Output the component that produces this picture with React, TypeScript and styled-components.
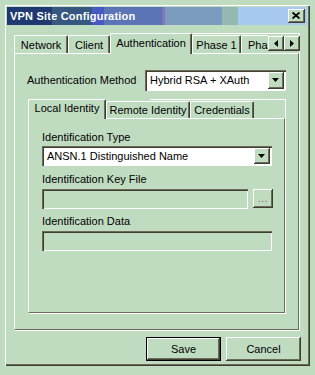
import React from "react";
import styled, { createGlobalStyle, css } from "styled-components";

const C = {
  face: "#c0dcc0",
  hi: "#ffffff",
  sh: "#6b6b58",
  dk: "#3e3e33",
};

const GlobalStyle = createGlobalStyle`
  *, *::before, *::after { box-sizing: border-box; }
  html, body { margin: 0; padding: 0; background: ${C.face}; }
  body {
    font-family: "Liberation Sans", Arial, sans-serif;
    font-size: 11px;
    color: #000;
  }
`;

const raised = css`
  background: ${C.face};
  box-shadow: inset -1px -1px 0 ${C.dk}, inset 1px 1px 0 ${C.hi},
    inset -2px -2px 0 ${C.sh};
`;

const sunken = css`
  box-shadow: inset 1px 1px 0 ${C.sh}, inset 2px 2px 0 ${C.dk},
    inset -1px -1px 0 ${C.hi};
`;

const Screen = styled.div`
  padding: 4px 0 0 4px;
`;

const Window = styled.div`
  width: 306px;
  height: 362px;
  padding: 3px;
  display: flex;
  flex-direction: column;
  background: ${C.face};
  box-shadow: inset 1px 1px 0 ${C.face}, inset 2px 2px 0 ${C.hi},
    inset -1px -1px 0 ${C.dk}, inset -2px -2px 0 ${C.sh};
`;

const TitleBar = styled.div`
  height: 18px;
  flex: 0 0 18px;
  display: flex;
  align-items: center;
  justify-content: space-between;
  padding: 0 2px 0 3px;
  background: linear-gradient(
    to right,
    #1e3a70 0 45px,
    #36577f 45px 85px,
    #4858c4 85px 97px,
    #5a74b6 97px 155px,
    #8474c0 155px 158px,
    #7b9cbe 158px 215px,
    #95b9b2 215px 231px,
    #a8caf0 231px
  );
`;

const Title = styled.span`
  color: #fff;
  font-weight: bold;
  font-size: 11px;
  letter-spacing: 0.2px;
  line-height: 13px;
`;

const CloseButton = styled.div`
  width: 17px;
  height: 14px;
  display: flex;
  align-items: center;
  justify-content: center;
  padding: 0 1px 1px 0;
  ${raised};
`;

const Body = styled.div`
  flex: 1;
  display: flex;
  flex-direction: column;
  padding: 8px 6px 0 7px;
`;

const TabControl = styled.div<{ $w: number; $h: number; $lineFrom: number }>`
  position: relative;
  width: ${(p) => p.$w}px;
  height: ${(p) => p.$h}px;
  flex: 0 0 auto;
  display: flex;
  flex-direction: column;
  &::before {
    content: "";
    position: absolute;
    top: 0;
    left: ${(p) => p.$lineFrom}px;
    right: 0;
    height: 1px;
    background: ${C.hi};
  }
  &::after {
    content: "";
    position: absolute;
    top: 0;
    right: 0;
    width: 1px;
    height: 24px;
    background: ${C.hi};
  }
`;

const TabStrip = styled.div<{ $h: number }>`
  position: relative;
  z-index: 1;
  height: ${(p) => p.$h}px;
  flex: 0 0 ${(p) => p.$h}px;
  display: flex;
  align-items: flex-start;
`;

const TabsViewport = styled.div`
  flex: 1;
  height: 100%;
  overflow: hidden;
  display: flex;
  align-items: flex-end;
`;

const Tab = styled.div<{ $active?: boolean; $w: number; $small?: boolean; $start?: boolean }>`
  flex: 0 0 ${(p) => p.$w}px;
  height: ${(p) =>
    p.$small ? (p.$active ? 20 : 17) : p.$active ? 21 : 18}px;
  margin-bottom: ${(p) => (p.$active ? 1 : 2)}px;
  background: ${C.face};
  border-top: 1px solid ${C.hi};
  border-left: 1px solid ${C.hi};
  border-right: 1px solid ${C.dk};
  border-radius: 2px 2px 0 0;
  box-shadow: inset -1px 0 0 ${C.sh};
  display: flex;
  align-items: center;
  justify-content: ${(p) => (p.$start ? "flex-start" : "center")};
  white-space: nowrap;
  line-height: 13px;
  padding: ${(p) => (p.$active ? "0 0 2px 0" : "1px 0 0 0")};
  padding-left: ${(p) => (p.$start ? "6px" : "0")};
`;

const ArrowGroup = styled.div`
  display: flex;
  margin-top: 3px;
`;

const ArrowButton = styled.div`
  width: 16px;
  height: 15px;
  display: flex;
  align-items: center;
  justify-content: center;
  padding: 0 1px 1px 0;
  ${raised};
`;

const Panel = styled.div`
  flex: 1;
  margin-top: -2px;
  margin-right: 1px;
  margin-bottom: 1px;
  border-top: 1px solid ${C.hi};
  border-left: 1px solid ${C.hi};
  border-right: 1px solid ${C.sh};
  border-bottom: 1px solid ${C.sh};
  box-shadow: 1px 1px 0 ${C.hi};
  display: flex;
  flex-direction: column;
`;

const OuterPanel = styled(Panel)`
  padding: 16px 0 0 12px;
`;

const InnerPanel = styled(Panel)`
  padding: 12px 0 0 13px;
`;

const FormRow = styled.div`
  display: flex;
  align-items: center;
  height: 21px;
`;

const RowLabel = styled.div`
  flex: 0 0 118px;
  line-height: 13px;
`;

const Combo = styled.div<{ $w: number; $h: number; $mt?: number }>`
  width: ${(p) => p.$w}px;
  height: ${(p) => p.$h}px;
  margin-top: ${(p) => p.$mt ?? 0}px;
  background: #fff;
  padding: 2px;
  display: flex;
  align-items: center;
  ${sunken};
`;

const ComboText = styled.div`
  flex: 1;
  padding-left: 3px;
  line-height: 13px;
  white-space: nowrap;
  overflow: hidden;
`;

const DropButton = styled.div`
  width: 16px;
  height: 100%;
  display: flex;
  align-items: center;
  justify-content: center;
  padding: 0 1px 1px 0;
  ${raised};
`;

const InnerArea = styled.div`
  margin: 8px 0 0 1px;
`;

const FieldLabel = styled.div<{ $mt?: number }>`
  line-height: 13px;
  height: 13px;
  margin-top: ${(p) => p.$mt ?? 0}px;
`;

const FieldRow = styled.div<{ $mt?: number }>`
  display: flex;
  gap: 5px;
  margin-top: ${(p) => p.$mt ?? 0}px;
`;

const DisabledField = styled.div<{ $w: number }>`
  width: ${(p) => p.$w}px;
  height: 20px;
  background: ${C.face};
  ${sunken};
`;

const BrowseButton = styled.div`
  width: 20px;
  height: 19px;
  display: flex;
  align-items: flex-end;
  justify-content: center;
  color: ${C.sh};
  font-size: 10px;
  line-height: 13px;
  padding-bottom: 3px;
  letter-spacing: 0.5px;
  ${raised};
`;

const ButtonRow = styled.div`
  display: flex;
  justify-content: flex-end;
  gap: 5px;
  margin-top: 6px;
`;

const PushButton = styled.div<{ $default?: boolean }>`
  width: 75px;
  height: 24px;
  display: flex;
  align-items: center;
  justify-content: center;
  line-height: 13px;
  ${(p) =>
    p.$default
      ? css`
          background: ${C.face};
          border: 1px solid #000;
          box-shadow: inset -1px -1px 0 ${C.dk}, inset 1px 1px 0 ${C.hi},
            inset -2px -2px 0 ${C.sh};
        `
      : raised};
`;

const Tri = ({ dir }: { dir: "down" | "left" | "right" }) => {
  if (dir === "down")
    return (
      <svg width="7" height="4" viewBox="0 0 7 4">
        <polygon points="0,0 7,0 3.5,4" fill="#000" />
      </svg>
    );
  if (dir === "left")
    return (
      <svg width="4" height="7" viewBox="0 0 4 7">
        <polygon points="4,0 4,7 0,3.5" fill="#000" />
      </svg>
    );
  return (
    <svg width="4" height="7" viewBox="0 0 4 7">
      <polygon points="0,0 0,7 4,3.5" fill="#000" />
    </svg>
  );
};

const CloseIcon = () => (
  <svg width="8" height="7" viewBox="0 0 8 7">
    <path d="M0.5 0.5 L7.5 6.5 M7.5 0.5 L0.5 6.5" stroke="#000" strokeWidth="1.8" />
  </svg>
);

export default function App() {
  return (
    <>
      <GlobalStyle />
      <Screen>
        <Window>
          <TitleBar>
            <Title>VPN Site Configuration</Title>
            <CloseButton>
              <CloseIcon />
            </CloseButton>
          </TitleBar>
          <Body>
            <TabControl $w={286} $h={298} $lineFrom={178}>
              <TabStrip $h={22}>
                <TabsViewport>
                  <Tab $w={54}>Network</Tab>
                  <Tab $w={42}>Client</Tab>
                  <Tab $w={82} $active>
                    Authentication
                  </Tab>
                  <Tab $w={49}>Phase 1</Tab>
                  <Tab $w={60} $start>
                    Phase 2
                  </Tab>
                </TabsViewport>
                <ArrowGroup>
                  <ArrowButton>
                    <Tri dir="left" />
                  </ArrowButton>
                  <ArrowButton>
                    <Tri dir="right" />
                  </ArrowButton>
                </ArrowGroup>
              </TabStrip>
              <OuterPanel>
                <FormRow>
                  <RowLabel>Authentication Method</RowLabel>
                  <Combo $w={141} $h={21}>
                    <ComboText>Hybrid RSA + XAuth</ComboText>
                    <DropButton>
                      <Tri dir="down" />
                    </DropButton>
                  </Combo>
                </FormRow>
                <InnerArea>
                  <TabControl $w={258} $h={215} $lineFrom={122}>
                    <TabStrip $h={21}>
                      <TabsViewport>
                        <Tab $w={78} $active $small>
                          Local Identity
                        </Tab>
                        <Tab $w={84} $small>
                          Remote Identity
                        </Tab>
                        <Tab $w={64} $small>
                          Credentials
                        </Tab>
                      </TabsViewport>
                    </TabStrip>
                    <InnerPanel>
                      <FieldLabel>Identification Type</FieldLabel>
                      <Combo $w={230} $h={20} $mt={2}>
                        <ComboText>ANSN.1 Distinguished Name</ComboText>
                        <DropButton>
                          <Tri dir="down" />
                        </DropButton>
                      </Combo>
                      <FieldLabel $mt={7}>Identification Key File</FieldLabel>
                      <FieldRow $mt={3}>
                        <DisabledField $w={206} />
                        <BrowseButton>...</BrowseButton>
                      </FieldRow>
                      <FieldLabel $mt={6}>Identification Data</FieldLabel>
                      <FieldRow $mt={3}>
                        <DisabledField $w={230} />
                      </FieldRow>
                    </InnerPanel>
                  </TabControl>
                </InnerArea>
              </OuterPanel>
            </TabControl>
            <ButtonRow>
              <PushButton $default>Save</PushButton>
              <PushButton>Cancel</PushButton>
            </ButtonRow>
          </Body>
        </Window>
      </Screen>
    </>
  );
}
